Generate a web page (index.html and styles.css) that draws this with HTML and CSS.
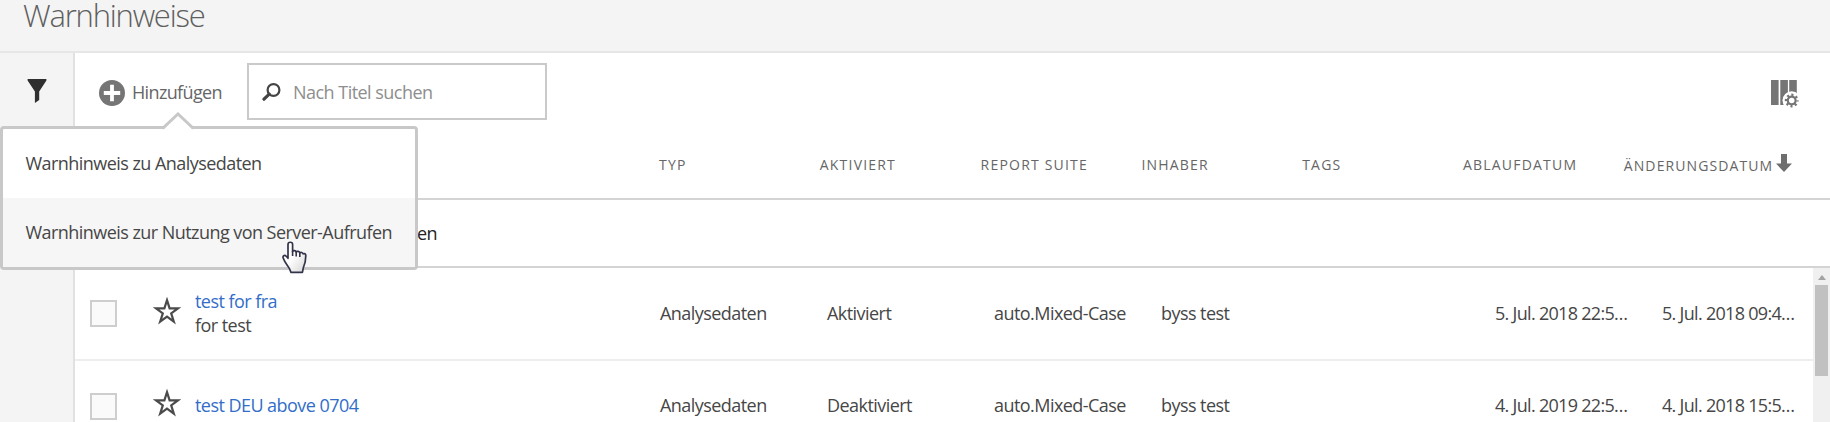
FILE: index.html
```
<!DOCTYPE html>
<html lang="de">
<head>
<meta charset="utf-8">
<title>Warnhinweise</title>
<link rel="stylesheet" href="styles.css">
</head>
<body>
<header class="page-header"><h1 class="page-title">Warnhinweise</h1></header>
<div class="workspace">
  <aside class="rail">
    <svg class="funnel" width="20" height="24" viewBox="0 0 20 24"><path d="M.6 0h18.800v1.600L12.200 12.500V21L7.900 24V12.500L.6 1.600z" fill="#2f2f2f"/></svg>
  </aside>
  <main class="content">
    <div class="toolbar">
      <button class="add">
        <svg width="26" height="26" viewBox="0 0 26 26"><circle cx="13" cy="13" r="13" fill="#757575"/><path d="M13 4.800v16.400M4.800 13h16.400" stroke="#fff" stroke-width="3.800"/></svg>
        <span class="add-label">Hinzufügen</span>
      </button>
      <div class="search">
        <svg width="19" height="18" viewBox="0 0 19 18"><circle cx="11.500" cy="7" r="5.900" fill="none" stroke="#444" stroke-width="2.200"/><path d="M7.200 11.200L2 16.200" stroke="#444" stroke-width="3.200" stroke-linecap="round"/></svg>
        <span class="placeholder">Nach Titel suchen</span>
      </div>
      <svg class="columns" width="28" height="28" viewBox="0 0 28 28">
        <path d="M0 0h7.600v25H0zM9.300 0h7.600v25H9.300zM18.200 0h7.600v25h-7.600z" fill="#757575"/>
        <circle cx="20.700" cy="20.500" r="9.200" fill="#fff"/>
        <circle cx="20.700" cy="20.500" r="3.900" fill="none" stroke="#757575" stroke-width="2.200"/>
        <circle cx="20.700" cy="20.500" r="5.700" fill="none" stroke="#757575" stroke-width="2.400" stroke-dasharray="2.100 2.377" stroke-dashoffset="1.050"/>
      </svg>
    </div>
    <div class="table-head">
      <span class="th">Typ</span><span class="th">Aktiviert</span><span class="th">Report Suite</span><span class="th">Inhaber</span><span class="th">Tags</span><span class="th">Ablaufdatum</span>
      <span class="th th-sorted">Änderungsdatum<svg width="16" height="18" viewBox="0 0 16 18"><path d="M5 0h6v9.500h5L8 18 0 9.500h5z" fill="#6e6e6e"/></svg></span>
    </div>
    <div class="select-row"><span>en</span></div>
    <div class="list">
      <div class="rows">
        <div class="row">
          <span class="check"></span>
          <svg class="star" width="28" height="28" viewBox="0 0 28 28"><path d="M14 3.200l2.600 8.100h8.400l-6.800 5 2.600 8.300-6.800-5.100-6.800 5.100 2.600-8.300-6.800-5h8.400z" fill="none" stroke="#4b4b4b" stroke-width="2.200"/></svg>
          <div class="name"><a class="link">test for fra</a><span>for test</span></div>
          <span class="td">Analysedaten</span><span class="td">Aktiviert</span><span class="td">auto.Mixed-Case</span><span class="td">byss test</span><span class="td"></span><span class="td num">5. Jul. 2018 22:5…</span><span class="td num num-last">5. Jul. 2018 09:4…</span>
        </div>
        <div class="row">
          <span class="check"></span>
          <svg class="star" width="28" height="28" viewBox="0 0 28 28"><path d="M14 3.200l2.600 8.100h8.400l-6.800 5 2.600 8.300-6.800-5.100-6.800 5.100 2.600-8.300-6.800-5h8.400z" fill="none" stroke="#4b4b4b" stroke-width="2.200"/></svg>
          <div class="name"><a class="link">test DEU above 0704</a></div>
          <span class="td">Analysedaten</span><span class="td">Deaktiviert</span><span class="td">auto.Mixed-Case</span><span class="td">byss test</span><span class="td"></span><span class="td num">4. Jul. 2019 22:5…</span><span class="td num num-last">4. Jul. 2018 15:5…</span>
        </div>
      </div>
      <div class="scrollbar">
        <svg width="8" height="5" viewBox="0 0 8 5"><path d="M4 0l4 5H0z" fill="#a3a3a3"/></svg>
        <div class="thumb"></div>
      </div>
    </div>
  </main>
</div>
<div class="popover">
  <svg class="beak" width="36" height="18" viewBox="0 0 36 18"><path d="M3 18L18 2.500 33 18z" fill="#fff"/><path d="M2.500 16.500L18 2l15.500 14.500" fill="none" stroke="#c8c8c8" stroke-width="3"/></svg>
  <div class="item">Warnhinweis zu Analysedaten</div>
  <div class="item item-hover">Warnhinweis zur Nutzung von Server-Aufrufen</div>
</div>
<svg class="cursor" width="26" height="33" viewBox="0 0 26 33">
  <defs><linearGradient id="hand" x1="0" y1="0" x2="1" y2="1"><stop offset=".45" stop-color="#fff"/><stop offset="1" stop-color="#d5d5d5"/></linearGradient></defs>
  <path d="M7 3.500c0-3 4.600-3 4.600 0v7c.6-1.300 3.200-1.200 3.600.5.800-1.100 3.200-.8 3.600.9 1-.9 2.900-.5 3.300 1 1.300-.8 2.700 0 2.700 1.800 0 5-1 8.500-2.400 11.800l-1 4.900H10l-1.500-3.700C6.100 24 3.800 21.500 2.400 17.500c-1.300-2.500 1.200-4 2.800-2.200l1.800 2z" fill="url(#hand)" stroke="#33334a" stroke-width="1.700" stroke-linejoin="round"/>
  <path d="M11.600 10v5M15.200 11v4.500M18.800 12v4" stroke="#33334a" stroke-width="1.600"/>
</svg>
</body>
</html>
```
FILE: styles.css
```
* { box-sizing: border-box; }
body {
  margin: 0;
  height: 422px;
  overflow: hidden;
  position: relative;
  background: #fff;
  color: #464646;
  font: 18px/24px "Open Sans", "Noto Sans", sans-serif;
  letter-spacing: -0.55px;
  white-space: nowrap;
}
.page-header {
  height: 53px;
  padding-left: 23px;
  background: #f4f4f4;
  border-bottom: 2px solid #e6e6e6;
}
.page-title {
  margin: 0;
  font-size: 31px;
  line-height: 31px;
  font-weight: 300;
  letter-spacing: -1.2px;
  color: #5f5f5f;
}
.workspace { display: flex; height: 369px; }
.rail {
  width: 75px;
  padding: 26px 0 0 27px;
  background: #f4f4f4;
  border-right: 2px solid #e1e1e1;
}
.rail svg { display: block; }
.content { flex: 1; min-width: 0; }
.toolbar { display: flex; height: 90px; padding: 10px 31px 0 24px; }
.add {
  display: flex;
  align-items: center;
  gap: 7px;
  height: 34px;
  margin-top: 13px;
  width: 148px;
  padding: 0;
  border: 0;
  background: none;
  font: inherit;
  letter-spacing: -0.65px;
  color: #666;
}
.add-label { padding-bottom: 2px; }
.search {
  display: flex;
  align-items: center;
  gap: 12px;
  width: 300px;
  height: 57px;
  padding-left: 13px;
  border: 2px solid #cacaca;
  color: #8e8e8e;
}
.placeholder { letter-spacing: -0.53px; }
.columns { margin: 17px 0 0 auto; }
.table-head {
  display: flex;
  height: 57px;
  padding: 12px 0 0 584px;
  border-bottom: 2px solid #d4d4d4;
}
.th {
  width: 160.800px;
  font-size: 14px;
  line-height: 20px;
  letter-spacing: 1.2px;
  text-transform: uppercase;
  color: #666;
}
.th-sorted { display: flex; gap: 3px; line-height: 22px; width: 180px; letter-spacing: 1.1px; }
.th-sorted svg { margin-top: -1px; }
.select-row {
  height: 68px;
  padding: 21px 0 0 342px;
  border-bottom: 2px solid #d4d4d4;
  color: #222;
}
.list { display: flex; height: 154px; overflow: hidden; }
.rows { flex: 1; min-width: 0; overflow: hidden; }
.row {
  display: flex;
  align-items: center;
  height: 93px;
  padding-left: 15px;
  border-bottom: 2px solid #eee;
}
.row > * { flex: none; }
.row + .row { height: 92px; }
.check {
  width: 27px;
  height: 27px;
  background: #fafafa;
  border: 2px solid #cecece;
}
.star { margin: -6px 0 0 35.500px; }
.name { display: flex; flex-direction: column; width: 479.500px; padding: 0 0 2px 14.500px; }
.link { color: #326ec8; }
.td { width: 167px; padding-bottom: 2px; }
.num { letter-spacing: -0.7px; }
.num-last { width: 151px; }
.scrollbar { width: 17px; padding: 7px 2px 0; background: #f0f0f0; }
.scrollbar svg { display: block; margin: 0 auto 5px; }
.thumb { height: 91px; background: #c1c1c1; }
.popover {
  position: absolute;
  left: 0;
  top: 126px;
  width: 418px;
  height: 144px;
  background: #fff;
  border: 3px solid #c8c8c8;
  border-radius: 4px;
}
.beak { position: absolute; left: 157px; top: -17px; }
.item { height: 69px; padding: 22px 0 0 22.500px; }
.item-hover { background: #f6f6f6; }
.cursor { position: absolute; left: 281px; top: 241px; }
```
